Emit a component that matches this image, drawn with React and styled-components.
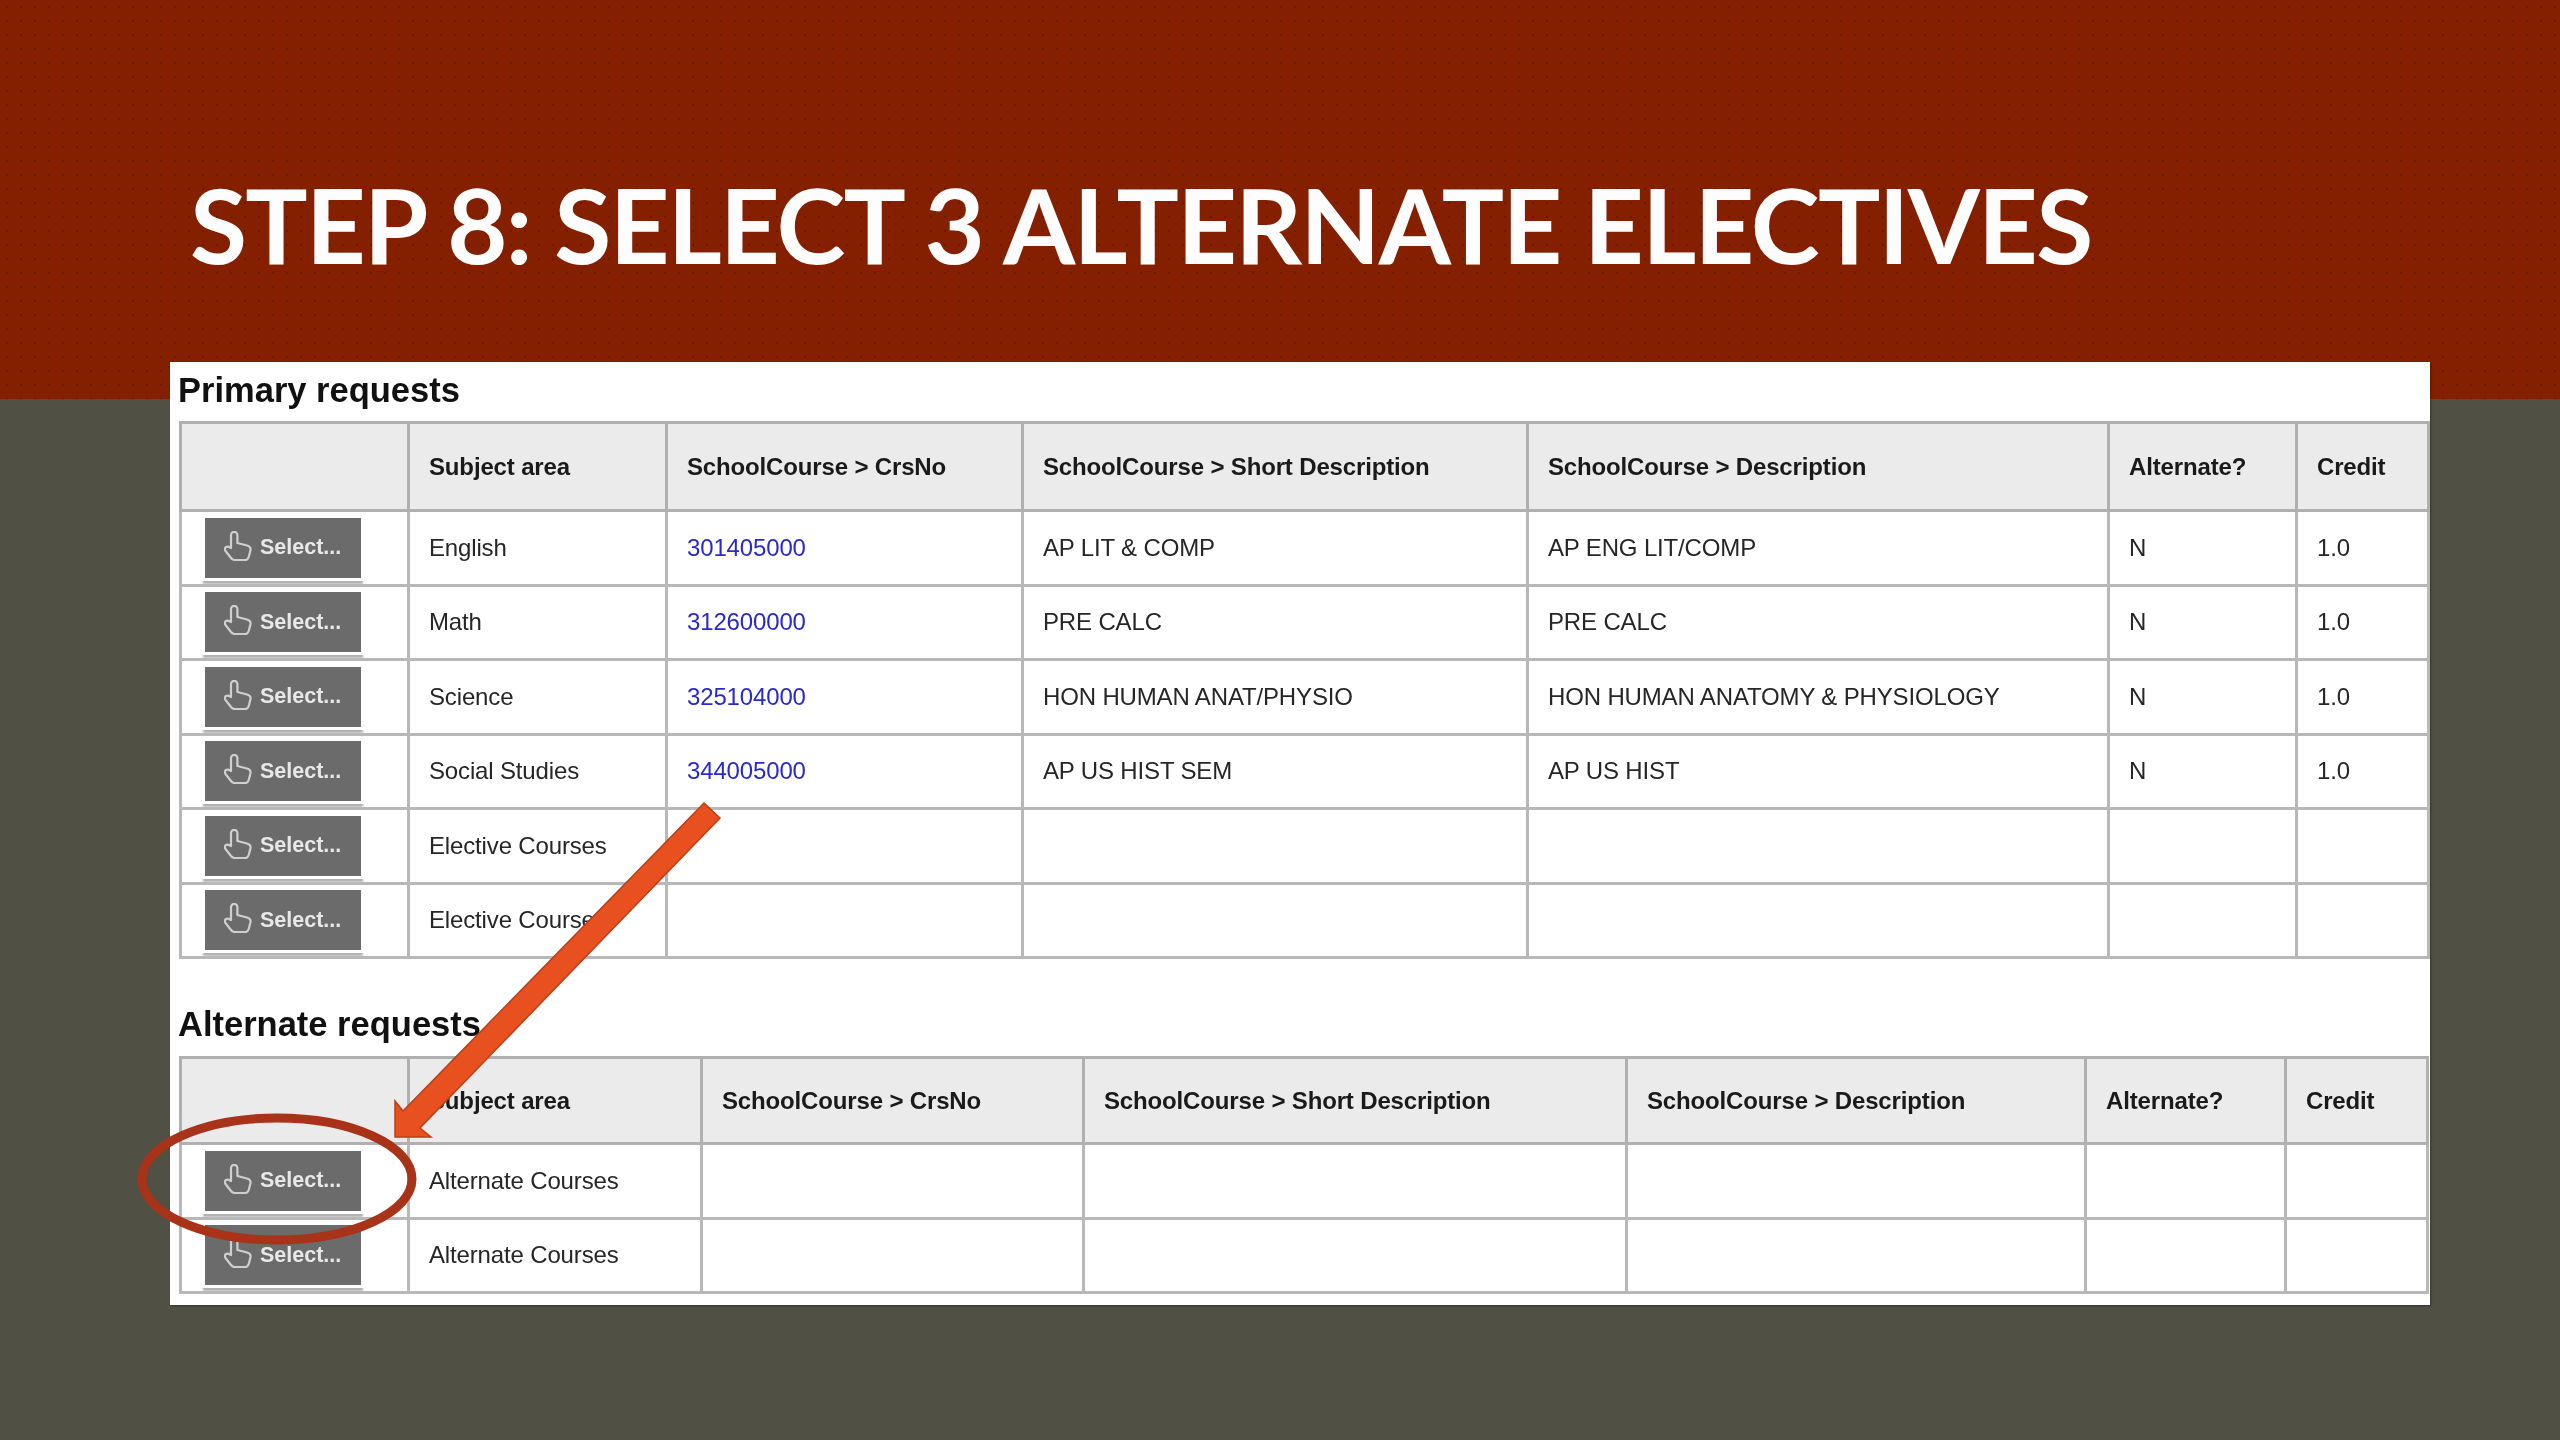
import styled, { createGlobalStyle } from "styled-components";

const primaryColumns = [228, 258, 356, 505, 581, 188, 132];
const alternateColumns = [228, 293, 382, 543, 459, 200, 142];

const headings = [
  "",
  "Subject area",
  "SchoolCourse > CrsNo",
  "SchoolCourse > Short Description",
  "SchoolCourse > Description",
  "Alternate?",
  "Credit",
];

const primaryRows = [
  ["English", "301405000", "AP LIT & COMP", "AP ENG LIT/COMP", "N", "1.0"],
  ["Math", "312600000", "PRE CALC", "PRE CALC", "N", "1.0"],
  ["Science", "325104000", "HON HUMAN ANAT/PHYSIO", "HON HUMAN ANATOMY & PHYSIOLOGY", "N", "1.0"],
  ["Social Studies", "344005000", "AP US HIST SEM", "AP US HIST", "N", "1.0"],
  ["Elective Courses", "", "", "", "", ""],
  ["Elective Courses", "", "", "", "", ""],
];

const alternateRows = [
  ["Alternate Courses", "", "", "", "", ""],
  ["Alternate Courses", "", "", "", "", ""],
];

const HandIcon = () => (
  <svg viewBox="0 0 28 30" fill="none" stroke="currentColor" strokeWidth="2.2" strokeLinejoin="round">
    <path d="M7 17V4a3.2 3.2 0 0 1 6.4 0V12L23 14.5Q27 15.5 26.5 19L25 25Q24 29 21 29H11Q8.5 29 7 27L1.5 20Q0 17.5 2 16Q4 15 6 16.5Z" />
  </svg>
);

const App = () => {
  return (
    <>
      <GlobalStyle />
      <Slide>
        <Title>STEP 8: SELECT 3 ALTERNATE ELECTIVES</Title>
        <Card>
          <SectionTitle>Primary requests</SectionTitle>
          <RequestTable columns={primaryColumns} rows={primaryRows} headHeight={85} />
          <SectionTitle $alternate>Alternate requests</SectionTitle>
          <RequestTable columns={alternateColumns} rows={alternateRows} headHeight={83} />
        </Card>
        <Callout viewBox="0 0 2560 1440">
          <polygon
            points="704,803 720,818 420,1128 431,1137 395,1137 395,1101 403,1111"
            fill="#e8501f"
            stroke="#b8401a"
            strokeWidth="1.5"
          />
          <ellipse cx="277" cy="1179" rx="135" ry="61" fill="none" stroke="#a83318" strokeWidth="9" />
        </Callout>
      </Slide>
    </>
  );
};

const RequestTable = ({ columns, rows, headHeight }) => (
  <Table>
    <colgroup>
      {columns.map((width, i) => (
        <Column key={i} $width={width} />
      ))}
    </colgroup>
    <thead>
      <tr>
        {headings.map((heading) => (
          <HeadCell key={heading} $height={headHeight}>
            {heading}
          </HeadCell>
        ))}
      </tr>
    </thead>
    <tbody>
      {rows.map(([subject, number, short, description, alternate, credit], i) => (
        <tr key={i}>
          <ButtonCell>
            <SelectButton>
              <HandIcon />
              Select...
            </SelectButton>
          </ButtonCell>
          <Cell>{subject}</Cell>
          <Cell>{number && <CourseLink>{number}</CourseLink>}</Cell>
          <Cell>{short}</Cell>
          <Cell>{description}</Cell>
          <Cell>{alternate}</Cell>
          <Cell>{credit}</Cell>
        </tr>
      ))}
    </tbody>
  </Table>
);

export default App;

const GlobalStyle = createGlobalStyle`
  html, body {
    margin: 0;
    padding: 0;
    background: #505044;
  }
`;

const Slide = styled.div`
  position: relative;
  box-sizing: border-box;
  width: 2560px;
  height: 1440px;
  overflow: hidden;
  padding: 170px 130px 0 170px;
  background:
    linear-gradient(to bottom, transparent 399px, #505044 399px),
    radial-gradient(rgba(60, 10, 0, 0.35) 1px, transparent 1.6px) 0 0 / 14px 14px,
    #842000;
`;

const Title = styled.h1`
  margin: 0 0 84px 20px;
  height: 108px;
  font-family: Lato, "Liberation Sans", sans-serif;
  font-size: 104px;
  line-height: 108px;
  letter-spacing: -1.75px;
  font-weight: 700;
  color: #fdfdfd;
  white-space: nowrap;
`;

const Card = styled.div`
  box-sizing: border-box;
  width: 2260px;
  height: 943px;
  padding: 0 0 0 9px;
  background: #fff;
  box-shadow: 1px 1px 2px rgba(0, 0, 0, 0.35);
  font-family: "Liberation Sans", Arial, sans-serif;
  filter: blur(0.7px);
`;

const SectionTitle = styled.h2`
  margin: 0 0 0 -1px;
  height: ${(p) => (p.$alternate ? "97px" : "59px")};
  line-height: ${(p) => (p.$alternate ? "131px" : "56px")};
  font-size: 34.5px;
  font-weight: 700;
  color: #111;
`;

const Table = styled.table`
  width: 2248px;
  table-layout: fixed;
  border-collapse: collapse;
  font-size: 24px;
  letter-spacing: -0.15px;
  color: #262626;
`;

const Column = styled.col`
  width: ${(p) => p.$width}px;
`;

const HeadCell = styled.th`
  height: ${(p) => p.$height}px;
  padding: 0 0 0 19px;
  background: #ebebeb;
  border: 3px solid #b0b0b0;
  font-weight: 700;
  text-align: left;
  white-space: nowrap;
  color: #1a1a1a;
`;

const Cell = styled.td`
  height: 71.5px;
  padding: 0 0 0 19px;
  border: 3px solid #b8b8b8;
  white-space: nowrap;
  overflow: hidden;
`;

const ButtonCell = styled(Cell)`
  padding-left: 23px;
`;

const SelectButton = styled.button`
  display: flex;
  align-items: center;
  gap: 8px;
  box-sizing: border-box;
  width: 156px;
  height: 60px;
  padding: 0 0 0 19px;
  border: none;
  background: #6b6b6b;
  box-shadow: 0 0 0 3px #fff, 0 4px 2px 2px #b0b0b0;
  color: #e8e8e8;
  font-family: "Liberation Sans", Arial, sans-serif;
  font-size: 21.5px;
  font-weight: 700;

  svg {
    width: 28px;
    height: 30px;
    flex: none;
    margin-top: -4px;
    color: #cfcfcf;
  }
`;

const CourseLink = styled.a`
  color: #2a2acb;
`;

const Callout = styled.svg`
  position: absolute;
  inset: 0;
  width: 2560px;
  height: 1440px;
  pointer-events: none;
`;
